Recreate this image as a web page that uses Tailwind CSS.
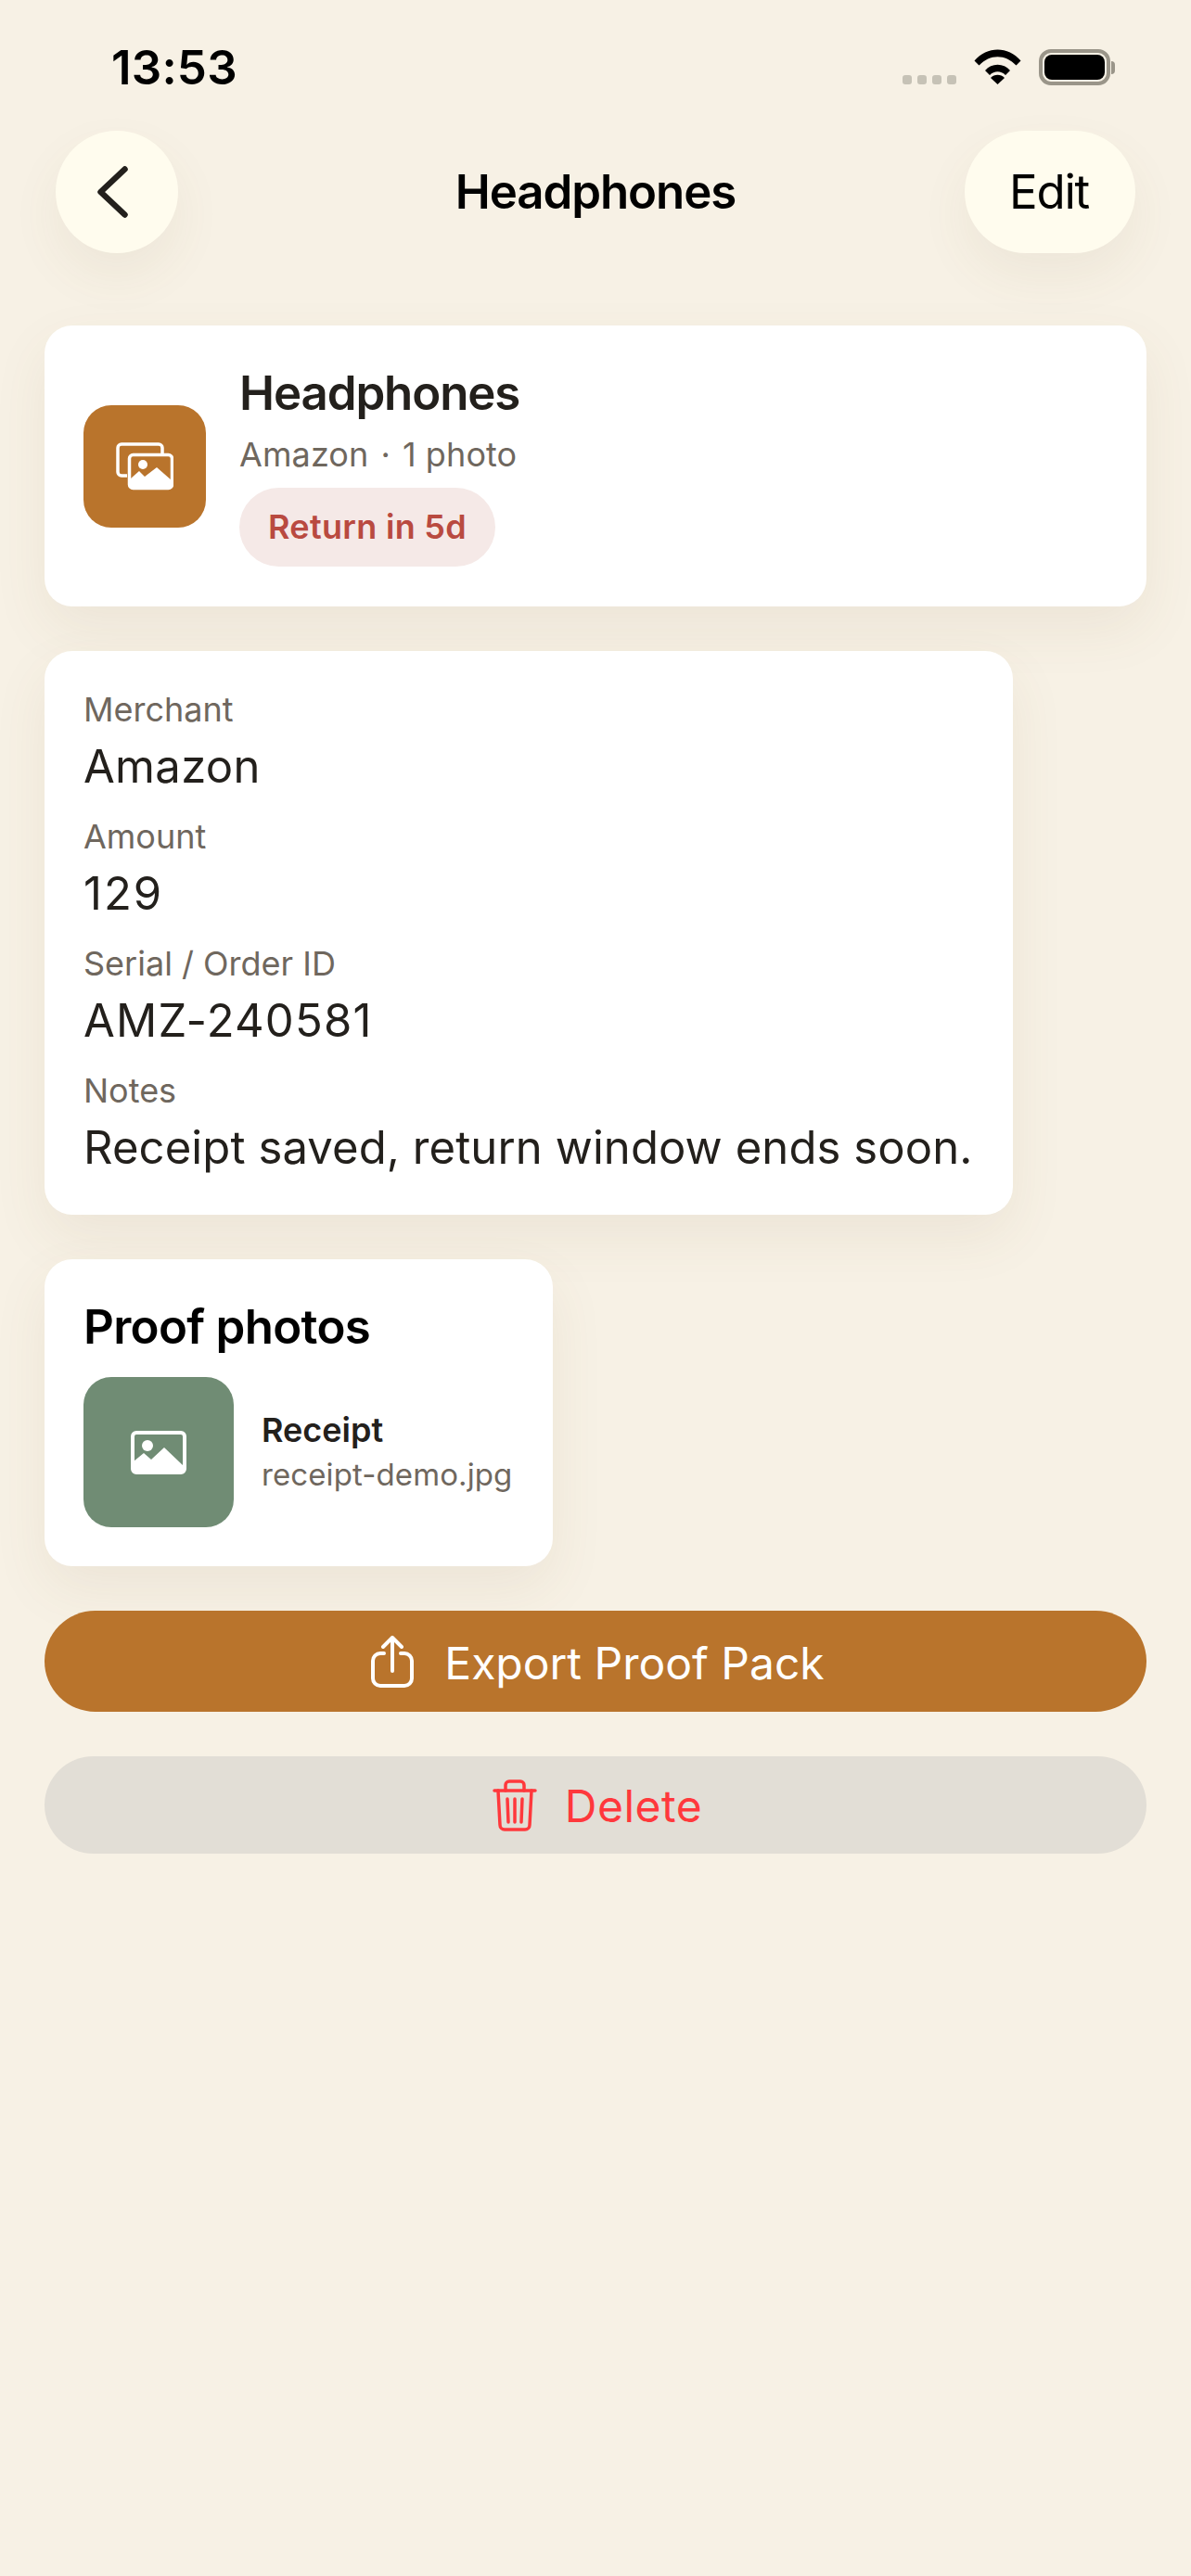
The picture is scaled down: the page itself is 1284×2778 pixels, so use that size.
<!DOCTYPE html>
<html lang="en">
<head>
  <meta charset="UTF-8" />
  <meta name="viewport" content="width=device-width, initial-scale=1.0"/>
  <title>Headphones</title>
  <script src="https://cdn.jsdelivr.net/npm/@tailwindcss/browser@4"></script>
</head>
<body class="bg-[#f7f1e5] text-[#23201c] font-['Inter','Liberation_Sans',sans-serif]">
  <div class="w-[1284px] h-[2778px] overflow-hidden">

    <!-- Status bar -->
    <div class="h-[141px] pl-[120px] pr-[82px] pt-[49px] flex justify-between items-start">
      <span class="text-[51px] leading-[48px] font-semibold text-black tracking-[0.2px]">13:53</span>
      <div class="flex items-start pt-[4px]">
        <div class="flex gap-[6px] mt-[28px] mr-[19px]">
          <span class="w-[10px] h-[10px] rounded-[3px] bg-[#c6c2b6]"></span>
          <span class="w-[10px] h-[10px] rounded-[3px] bg-[#c6c2b6]"></span>
          <span class="w-[10px] h-[10px] rounded-[3px] bg-[#c6c2b6]"></span>
          <span class="w-[10px] h-[10px] rounded-[3px] bg-[#c6c2b6]"></span>
        </div>
        <svg class="w-[51px] h-[38px] mr-[19px]" viewBox="0 0 51 38" fill="black">
          <path d="M0.5 12.5C14 -3.5 37 -3.5 50.5 12.5L45.5 17.5C34 5 17 5 5.5 17.5Z"/>
          <path d="M12 23C19 14.500 32 14.500 39 23L34 28C29 23 22 23 17 28Z"/>
          <path d="M25.500 38L18 31C22 26.800 29 26.800 33 31Z"/>
        </svg>
        <div class="flex items-center">
          <div class="w-[77px] h-[39px] rounded-[13px] border-[4px] border-[#9a9589] p-[2px]">
            <div class="w-full h-full rounded-[8px] bg-black"></div>
          </div>
          <span class="w-[4px] h-[14px] ml-[1px] rounded-r-full bg-[#9a9589]"></span>
        </div>
      </div>
    </div>

    <!-- Nav -->
    <div class="px-[60px] h-[132px] grid grid-cols-[1fr_auto_1fr] items-center">
      <button class="w-[132px] h-[132px] rounded-full bg-[#fffcee] shadow-[0_24px_54px_rgba(110,95,50,0.07)] flex items-center justify-center">
        <svg class="w-[36px] h-[60px] mr-[6px]" viewBox="0 0 36 60" fill="none" stroke="#23201c" stroke-width="6.500" stroke-linecap="round" stroke-linejoin="round">
          <path d="M29.500 5.500 3.500 30l26 24.500"/>
        </svg>
      </button>
      <h1 class="text-[51px] leading-[60px] font-semibold text-black tracking-[-1.100px]">Headphones</h1>
      <button class="justify-self-end w-[184px] h-[132px] pr-[2px] rounded-full bg-[#fffcee] shadow-[0_24px_54px_rgba(110,95,50,0.07)] text-[51px] leading-[60px] text-black tracking-[-1.200px]">Edit</button>
    </div>

    <div class="px-[48px] pt-[78px] flex flex-col items-start gap-[48px]">

      <!-- Summary -->
      <div class="w-[1188px] h-[303px] rounded-[30px] bg-white shadow-[0_24px_60px_rgba(110,95,50,0.08)] pl-[42px] flex items-center gap-[36px]">
        <div class="w-[132px] h-[132px] rounded-[30px] bg-[#b9742c] flex items-center justify-center">
          <svg class="w-[62px] h-[52px]" viewBox="0 0 62 52" fill="none" stroke="white" stroke-width="3.500">
            <path d="M12 36H6a4 4 0 0 1-4-4V6a4 4 0 0 1 4-4h40a4 4 0 0 1 4 4v7"/>
            <rect x="14.500" y="13.500" width="46" height="36" rx="4"/>
            <circle cx="29" cy="24" r="5" fill="white" stroke="none"/>
            <path d="M16 39 25 31 31 37 44 27 60 41V47a3 3 0 0 1-3 3H19a3 3 0 0 1-3-3Z" fill="white" stroke="none"/>
          </svg>
        </div>
        <div class="flex flex-col items-start">
          <h2 class="text-[51px] leading-[60px] font-semibold tracking-[-1.100px]">Headphones</h2>
          <p class="mt-[12px] text-[36px] leading-[48px] text-[#6f675e] tracking-[0.1px]">Amazon<span class="mx-[13px]">·</span>1 photo</p>
          <span class="mt-[12px] h-[85px] px-[31px] rounded-full bg-[#f5e9e7] text-[#b94a40] text-[36px] font-semibold leading-[85px] tracking-[0.3px]">Return in 5d</span>
        </div>
      </div>

      <!-- Details -->
      <div class="w-[1044px] h-[608px] rounded-[30px] bg-white shadow-[0_24px_60px_rgba(110,95,50,0.08)] px-[42px] pt-[39px]">
        <dl>
          <dt class="text-[36px] leading-[48px] text-[#6f675e]">Merchant</dt>
          <dd class="mt-[8px] h-[81px] text-[49px] leading-[60px] tracking-[0.3px]">Amazon</dd>
          <dt class="text-[36px] leading-[48px] text-[#6f675e]">Amount</dt>
          <dd class="mt-[8px] h-[81px] text-[49px] leading-[60px] tracking-[2px]">129</dd>
          <dt class="text-[36px] leading-[48px] text-[#6f675e]">Serial / Order ID</dt>
          <dd class="mt-[8px] h-[81px] text-[49px] leading-[60px] tracking-[1.200px]">AMZ-240581</dd>
          <dt class="text-[36px] leading-[48px] text-[#6f675e]">Notes</dt>
          <dd class="mt-[8px] text-[49px] leading-[60px] tracking-[0.1px] whitespace-nowrap">Receipt saved, return window ends soon.</dd>
        </dl>
      </div>

      <!-- Proof photos -->
      <div class="w-[548px] h-[331px] rounded-[30px] bg-white shadow-[0_24px_60px_rgba(110,95,50,0.08)] px-[42px] pt-[43px]">
        <h2 class="text-[51px] leading-[60px] font-semibold text-black tracking-[-0.700px]">Proof photos</h2>
        <div class="mt-[24px] flex items-center gap-[30px]">
          <div class="w-[162px] h-[162px] rounded-[30px] bg-[#708c74] flex items-center justify-center">
            <svg class="w-[60px] h-[47px]" viewBox="0 0 60 47" fill="none">
              <rect x="2" y="2" width="56" height="43" rx="4" stroke="white" stroke-width="4"/>
              <circle cx="18" cy="16" r="6" fill="white"/>
              <path d="M3 33 14 24 22 31 36 18 57 38V41a3 3 0 0 1-3 3H6a3 3 0 0 1-3-3Z" fill="white"/>
            </svg>
          </div>
          <div>
            <p class="text-[36px] leading-[44px] font-semibold">Receipt</p>
            <p class="mt-[4px] text-[33px] leading-[44px] text-[#6f675e] tracking-[0.1px]">receipt-demo.jpg</p>
          </div>
        </div>
      </div>

      <!-- Actions -->
      <div class="w-[1188px] flex flex-col gap-[48px]">
        <button class="h-[109px] pl-[5px] rounded-full bg-[#b9742c] text-white flex items-center justify-center gap-[33px]">
          <svg class="w-[46px] h-[56px]" viewBox="0 0 46 56" fill="none" stroke="white" stroke-width="4" stroke-linecap="round" stroke-linejoin="round">
            <path d="M23 38V3M13 12l10-10 10 10"/>
            <path d="M14 19H10a8 8 0 0 0-8 8v19a8 8 0 0 0 8 8h26a8 8 0 0 0 8-8V27a8 8 0 0 0-8-8h-4"/>
          </svg>
          <span class="mt-[4px] text-[48px] leading-[60px]">Export Proof Pack</span>
        </button>
        <button class="h-[105px] pl-[4px] rounded-full bg-[#e2ded6] text-[#ff383c] flex items-center justify-center gap-[30px]">
          <svg class="w-[48px] h-[56px]" viewBox="0 0 48 56" fill="none" stroke="#ff383c" stroke-width="3.500" stroke-linecap="round" stroke-linejoin="round">
            <path d="M2 12h44"/>
            <path d="M14 12V6a4 4 0 0 1 4-4h12a4 4 0 0 1 4 4v6"/>
            <path d="M6 12l2 37a5 5 0 0 0 5 5h22a5 5 0 0 0 5-5l2-37"/>
            <path d="M16 21l1 25M24 21v25M32 21l-1 25"/>
          </svg>
          <span class="mt-[2px] text-[48px] leading-[60px] tracking-[0.5px]">Delete</span>
        </button>
      </div>
    </div>
  </div>
</body>
</html>
